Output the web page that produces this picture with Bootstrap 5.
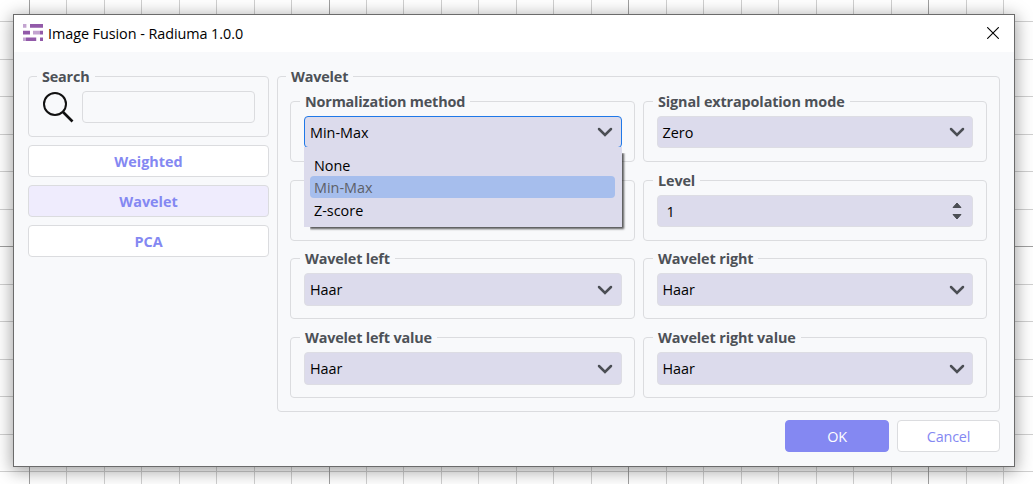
<!DOCTYPE html>
<html lang="en">
<head>
<meta charset="utf-8">
<title>Image Fusion - Radiuma 1.0.0</title>
<link href="https://cdn.jsdelivr.net/npm/bootstrap@5.3.0/dist/css/bootstrap.min.css" rel="stylesheet">
<style>
  body { width: 1033px; height: 484px; background: #fff; font-family: "Open Sans", "Noto Sans", sans-serif; font-size: 14.4px; line-height: 20px; color: #000; }
  .sheet-lines { position: absolute; inset: 0; z-index: -1; }
  .desk { padding: 14px 18px 17px 13px; height: 484px; }
  .dialog { height: 453px; border: 1px solid #6b6b6b; background: #f8f9fb; box-shadow: 0 3px 16px 1px rgba(0,0,0,.38); }
  .titlebar { height: 37px; padding: 0 15px 0 9px; background: #fff; }
  .titlebar span { letter-spacing: -.06px; margin-left: 5px; }
  .titlebar .app-logo { margin-top: -2px; }
  .titlebar .close-mark { margin-top: -1px; }
  .content { padding: 24px 14px 0; gap: 8px; }
  .sidebar { width: 241px; }
  .group { position: relative; border: 1px solid #dbdcdf; border-radius: 4px; }
  .group > .caption { position: absolute; top: -10px; left: 8px; padding: 0 5px; background: #f8f9fb; font-weight: 700; color: #4d5157; white-space: nowrap; font-size: 14.4px; letter-spacing: -.17px; }
  .search-group { height: 61px; padding: 0 13px; }
  .search-group .form-control { height: 32px; background: transparent; border: 1px solid #dbdcdf; border-radius: 4px; }
  .btn { --bs-btn-border-radius: 4px; --bs-btn-padding-y: 0; --bs-btn-line-height: 20px; --bs-btn-font-size: 14.4px; height: 32px; padding-top: 1px; border-color: #dbdcdf; background: #fff; color: #8488f2; letter-spacing: -.2px; }
  .sidebar .btn { font-weight: 700; letter-spacing: 0; }
  .sidebar .btn.chosen { background: #efecfd; }
  .params { height: 336px; padding: 24px 12px 13px; }
  .params-grid { display: grid; grid-template-columns: 345px 344px; grid-template-rows: 79px 78px 79px 61px; column-gap: 8px; }
  .params-grid > .group { height: 61px; padding: 14px 13px 0; }
  .params-grid > .group:nth-child(odd) { padding-right: 12px; }
  .params-grid > .group > .caption { left: 9px; }
  .params-grid > .group:nth-child(even) > .caption { left: 9px; letter-spacing: -.12px; }
  .picker { position: relative; height: 32px; padding: 1px 8px 0 5px; background: #dcdbec; border: 1px solid #dddde4; border-radius: 4px; letter-spacing: 0; }
  .picker svg { margin-top: -1px; }
  .params-grid > .group:nth-child(even) .picker { padding-left: 4.500px; padding-right: 7px; }
  .picker.tall { height: 33px; }
  .picker.open { border-color: #1f78e8; }
  .options { position: absolute; z-index: 5; top: 30px; left: -1px; width: 318px; height: 80px; padding: 7px 7px 0 6px; background: #dcdbec; }
  .options::before { content: ""; position: absolute; z-index: -1; inset: 6px 0 0 6px; box-shadow: 1px 1px 2px 1px rgba(0,0,0,.65); clip-path: inset(0 -6px -6px 0); }
  .options div { height: 23px; line-height: 23px; padding-left: 4px; border-radius: 4px; }
  .options .current { height: 22px; line-height: 23px; margin-top: -1px; margin-bottom: 1px; background: #a6beed; color: #5d6068; }
  .footer-buttons { padding: 8px 14px 0; gap: 8px; }
  .footer-buttons .btn { width: 103px; }
  .footer-buttons .btn.accept { width: 104px; background: #8488f2; border-color: #8488f2; color: #fff; }
</style>
<script src="https://cdn.jsdelivr.net/npm/bootstrap@5.3.0/dist/js/bootstrap.bundle.min.js"></script>
</head>
<body class="overflow-hidden">
<svg class="sheet-lines" width="1033" height="484" shape-rendering="crispEdges" fill="none">
  <path stroke="#d0d0d0" d="M66.500 0V484M104.500 0V484M141.500 0V484M179.500 0V484M216.500 0V484M254.500 0V484M291.500 0V484M366.500 0V484M403.500 0V484M441.500 0V484M478.500 0V484M516.500 0V484M553.500 0V484M591.500 0V484M666.500 0V484M703.500 0V484M741.500 0V484M778.500 0V484M816.500 0V484M853.500 0V484M891.500 0V484M966.500 0V484M1003.500 0V484M0 21.500H1033M0 59.500H1033M0 96.500H1033M0 134.500H1033M0 171.500H1033M0 209.500H1033M0 284.500H1033M0 321.500H1033M0 359.500H1033M0 396.500H1033M0 434.500H1033M0 471.500H1033"/>
  <path stroke="#a0a0a0" d="M29.500 0V484M329.500 0V484M628.500 0V484M928.500 0V484M0 246.500H1033"/>
</svg>
<div class="desk">
  <div class="dialog d-flex flex-column">
    <header class="titlebar d-flex align-items-center">
      <svg class="app-logo" width="20" height="17" viewBox="0 0 20 17">
        <path fill="#925aa9" d="M7 0h13v3.700H7zM0 6.800h7v3.600H0zM17 6.800h3v3.600h-3zM3 13.500h10v3.500H3zM17 13.500h3v3.500h-3z"/>
        <path fill="#c3a4d0" d="M0 0h3v3.700H0zM10 6.800h7v3.600h-7zM0 13.500h3v3.500H0z"/>
        <path fill="#e6d9eb" d="M3 0h1v3.700H3zM13 13.500h1v3.500h-1z"/>
      </svg>
      <span>Image Fusion - Radiuma 1.0.0</span>
      <svg class="close-mark ms-auto" width="12" height="12" viewBox="0 0 12 12" stroke="#000" stroke-width="1.1"><path d="M.2.2l11.600 11.600M11.800.2L.2 11.800"/></svg>
    </header>
    <main class="content d-flex">
      <aside class="sidebar d-flex flex-column gap-2">
        <section class="group search-group d-flex align-items-center">
          <div class="caption">Search</div>
          <svg class="flex-shrink-0" width="32" height="32" viewBox="0 0 32 32" fill="none" stroke="#111"><circle cx="13" cy="13" r="11" stroke-width="2"/><path d="M21 21l9.500 9.500" stroke-width="2.600"/></svg>
          <input class="form-control ms-2" aria-label="Search">
        </section>
        <button class="btn">Weighted</button>
        <button class="btn chosen">Wavelet</button>
        <button class="btn">PCA</button>
      </aside>
      <section class="group params flex-grow-1">
        <div class="caption">Wavelet</div>
        <div class="params-grid">
          <div class="group"><div class="caption">Normalization method</div>
            <div class="picker open d-flex align-items-center justify-content-between">Min-Max
              <svg width="16" height="10" viewBox="0 0 16 10" fill="none" stroke="#4b4e54" stroke-width="2.500" stroke-linecap="round"><path d="M2 2l6 6 6-6"/></svg>
              <div class="options"><div>None</div><div class="current">Min-Max</div><div>Z-score</div></div>
            </div></div>
          <div class="group"><div class="caption">Signal extrapolation mode</div>
            <div class="picker d-flex align-items-center justify-content-between">Zero
              <svg width="16" height="10" viewBox="0 0 16 10" fill="none" stroke="#4b4e54" stroke-width="2.500" stroke-linecap="round"><path d="M2 2l6 6 6-6"/></svg></div></div>
          <div class="group"></div>
          <div class="group"><div class="caption">Level</div>
            <div class="picker d-flex align-items-center justify-content-between"><span class="ps-1">1</span>
              <svg width="16" height="20" viewBox="0 0 16 20" fill="#4b4e54" stroke="#4b4e54" stroke-linejoin="round"><path d="M4 6.500h8L8 2zM4 13.500h8L8 18z"/></svg></div></div>
          <div class="group"><div class="caption">Wavelet left</div>
            <div class="picker tall d-flex align-items-center justify-content-between">Haar
              <svg width="16" height="10" viewBox="0 0 16 10" fill="none" stroke="#4b4e54" stroke-width="2.500" stroke-linecap="round"><path d="M2 2l6 6 6-6"/></svg></div></div>
          <div class="group"><div class="caption">Wavelet right</div>
            <div class="picker tall d-flex align-items-center justify-content-between">Haar
              <svg width="16" height="10" viewBox="0 0 16 10" fill="none" stroke="#4b4e54" stroke-width="2.500" stroke-linecap="round"><path d="M2 2l6 6 6-6"/></svg></div></div>
          <div class="group"><div class="caption">Wavelet left value</div>
            <div class="picker tall d-flex align-items-center justify-content-between">Haar
              <svg width="16" height="10" viewBox="0 0 16 10" fill="none" stroke="#4b4e54" stroke-width="2.500" stroke-linecap="round"><path d="M2 2l6 6 6-6"/></svg></div></div>
          <div class="group"><div class="caption">Wavelet right value</div>
            <div class="picker tall d-flex align-items-center justify-content-between">Haar
              <svg width="16" height="10" viewBox="0 0 16 10" fill="none" stroke="#4b4e54" stroke-width="2.500" stroke-linecap="round"><path d="M2 2l6 6 6-6"/></svg></div></div>
        </div>
      </section>
    </main>
    <footer class="footer-buttons d-flex justify-content-end">
      <button class="btn accept">OK</button>
      <button class="btn">Cancel</button>
    </footer>
  </div>
</div>
</body>
</html>
